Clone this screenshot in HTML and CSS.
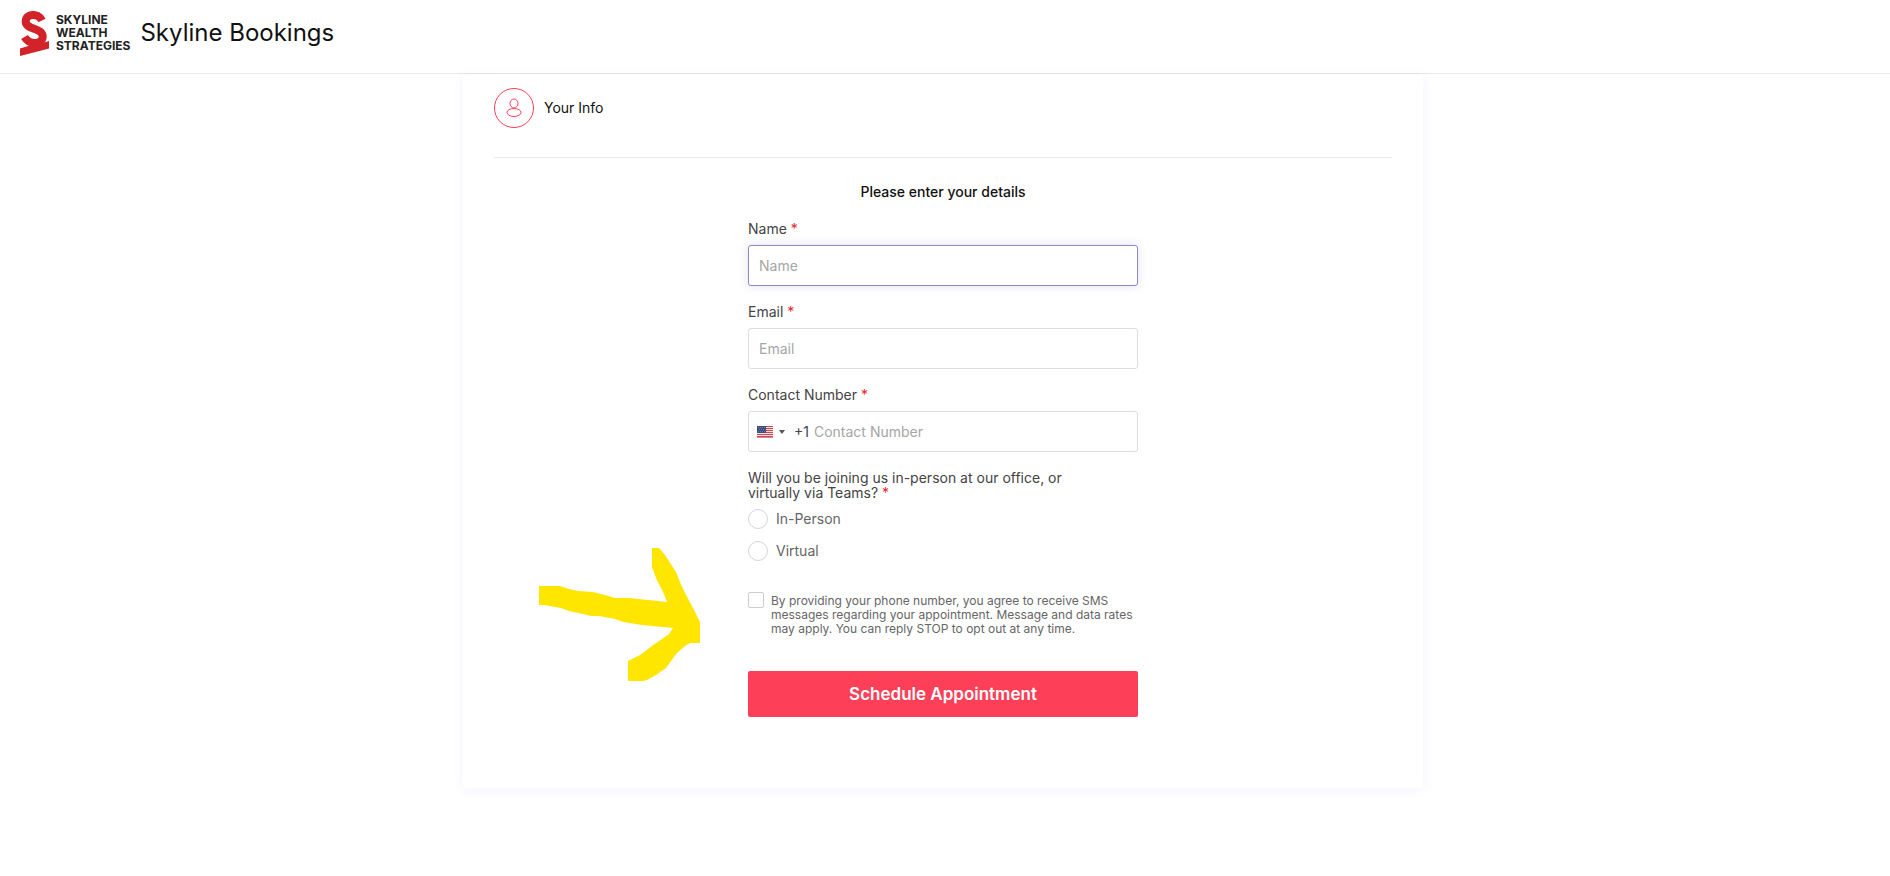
FILE: index.html
```html
<!DOCTYPE html>
<html lang="en">
<head>
<meta charset="utf-8">
<meta name="viewport" content="width=device-width, initial-scale=1">
<title>Skyline Bookings</title>
<link rel="stylesheet" href="styles.css">
</head>
<body>
<header class="topbar">
  <div class="brand">
    <svg class="brand-mark" viewBox="0 0 30 46" aria-hidden="true">
      <path d="M22 9.500C18 1.500 5.700 2.500 5.700 10.500C5.700 19 22.700 16.500 22.700 25.500C22.700 33 10 35 4.500 26" fill="none" stroke="#d2232a" stroke-width="8"/>
      <path d="M0 37.500L10 34.500L17 31L21 32.500L29 30V37.500L0 45Z" fill="#d2232a"/>
    </svg>
    <div class="brand-name">SKYLINE<br>WEALTH<br>STRATEGIES</div>
  </div>
  <h1 class="title">Skyline Bookings</h1>
</header>

<main class="page">
  <section class="card">
    <div class="step">
      <span class="step-icon">
        <svg width="16" height="20" viewBox="0 0 16 20" fill="none" stroke="#fd3f57" aria-hidden="true">
          <ellipse cx="8" cy="5.500" rx="4" ry="4.500"/>
          <ellipse cx="8" cy="14.500" rx="7" ry="4"/>
        </svg>
      </span>
      <span class="step-label">Your Info</span>
    </div>

    <form class="form">
      <h2 class="form-title">Please enter your details</h2>

      <div class="field">
        <label class="label" for="name">Name <span class="required">*</span></label>
        <input class="input input-active" id="name" type="text" placeholder="Name">
      </div>

      <div class="field">
        <label class="label" for="email">Email <span class="required">*</span></label>
        <input class="input" id="email" type="email" placeholder="Email">
      </div>

      <div class="field">
        <label class="label" for="phone">Contact Number <span class="required">*</span></label>
        <div class="input phone">
          <button class="country" type="button" aria-label="Country: United States">
            <svg width="16" height="12" viewBox="0 0 16 12" aria-hidden="true">
              <path fill="#f3dfe2" d="M0 0h16v12H0z"/>
              <path stroke="#cb4a58" d="M0 .5h16M0 2.500h16M0 4.500h16M0 6.500h16M0 8.500h16M0 10.500h16M0 11.900h16"/>
              <path fill="#3c4f7f" d="M0 0h9v7H0z"/>
              <path stroke="#6b7aa0" stroke-dasharray="1 1" d="M1 1.500h7M2 3.500h6M1 5.500h7"/>
            </svg>
            <svg width="6" height="4" viewBox="0 0 6 4" aria-hidden="true"><path d="M0 0h6L3 4z" fill="#555"/></svg>
          </button>
          <span class="dial">+1</span>
          <input class="phone-input" id="phone" type="tel" placeholder="Contact Number">
        </div>
      </div>

      <fieldset class="choices">
        <legend class="label choices-label">Will you be joining us in-person at our office, or virtually via Teams? <span class="required">*</span></legend>
        <label class="choice"><input class="radio" type="radio" name="mode"> In-Person</label>
        <label class="choice"><input class="radio" type="radio" name="mode"> Virtual</label>
      </fieldset>

      <label class="consent">
        <input class="checkbox" type="checkbox">
        <span class="consent-text">By providing your phone number, you agree to receive SMS messages regarding your appointment. Message and data rates may apply. You can reply STOP to opt out at any time.</span>
      </label>

      <button class="submit" type="submit">Schedule Appointment</button>
    </form>

    <svg class="arrow" width="162" height="134" viewBox="0 0 162 134" aria-hidden="true">
      <path fill="#ffe600" d="M0 38H21L30 41L39 43L54 44L66 47L76 50L90 50L128 54L124 44L117 30L113 19V0H120L126 7L137 24L143 39L155 62L161 74V95H151L146 98L138 105L132 113L127 120L117 127L108 132L105 133H89V113L101 107L113 98L130 86L134 80L103 77L84 74L76 71L60 68H52L44 66L30 63L22 60L5 57H0Z"/>
    </svg>
  </section>
</main>
</body>
</html>
```
FILE: styles.css
```css
* { box-sizing: border-box; }

body {
  margin: 0;
  background: #fff;
  color: #111;
  font: 14px/20px Inter, "Liberation Sans", sans-serif;
}

button, input { font: inherit; color: inherit; }

.topbar {
  display: flex;
  align-items: flex-start;
  gap: 10px;
  height: 74px;
  padding: 11px 20px 0;
  border-bottom: 1px solid #e8e8e8;
}

.brand { display: flex; gap: 6px; }

.brand-mark { width: 30px; height: 46px; }

.brand-name {
  padding-top: 2px;
  color: #222;
  font-size: 12px;
  line-height: 13px;
  font-weight: 700;
}

.title {
  margin: 0;
  padding-top: 7px;
  font-size: 24px;
  line-height: 30px;
  font-weight: 400;
}

.page { padding: 0 4px 88px 0; }

.card {
  position: relative;
  max-width: 960px;
  margin: 0 auto;
  padding: 14px 31px 71px;
  border-radius: 0 0 4px 4px;
  box-shadow: 0 2px 12px rgba(90, 90, 255, 0.07);
}

.step {
  display: flex;
  align-items: center;
  gap: 10px;
  padding-bottom: 29px;
  border-bottom: 1px solid #e8e8e8;
}

.step-icon {
  display: flex;
  align-items: center;
  justify-content: center;
  width: 40px;
  height: 40px;
  border: 1px solid #fd3f57;
  border-radius: 50%;
}

.form {
  display: flex;
  flex-direction: column;
  gap: 18px;
  max-width: 390px;
  margin: 0 auto;
  padding-top: 24px;
}

.form-title {
  margin: 0 0 1px;
  font-size: 14px;
  font-weight: 500;
  text-align: center;
}

.field { display: flex; flex-direction: column; gap: 9px; }

.label { padding: 0; color: #444; line-height: 15px; }

.required { color: #e8252b; }

.input {
  width: 100%;
  height: 41px;
  padding: 0 10px;
  border: 1px solid #dedede;
  border-radius: 3px;
  background: #fff;
  outline: 0;
}

.input-active {
  border-color: #8f89c0;
  box-shadow: 0 0 10px rgba(90, 80, 190, 0.18);
}

::placeholder { color: #a6a6a6; opacity: 1; }

.phone {
  display: flex;
  align-items: center;
  padding: 0 8px;
}

.country {
  display: flex;
  align-items: center;
  gap: 6px;
  padding: 0;
  border: 0;
  background: none;
}

.dial { padding: 0 5px 0 9px; color: #444; }

.phone-input {
  flex: 1;
  min-width: 0;
  padding: 0;
  border: 0;
  outline: 0;
  background: none;
}

.choices {
  display: flex;
  flex-direction: column;
  gap: 12px;
  margin: 0;
  padding: 0;
  border: 0;
}

.choices-label { max-width: 350px; margin-bottom: 9px; }

.choice {
  display: flex;
  align-items: center;
  gap: 8px;
  color: #666;
}

.radio, .checkbox {
  appearance: none;
  flex: none;
  margin: 0;
  border: 1px solid #d5d5e0;
  background: #fff;
}

.radio { width: 20px; height: 20px; border-radius: 50%; }

.checkbox { width: 16px; height: 16px; border-color: #ccc; border-radius: 2px; }

.consent {
  display: flex;
  gap: 7px;
  margin-top: 13px;
  color: #666;
  font-size: 12px;
  line-height: 14px;
}

.consent-text { padding-top: 2px; }

.submit {
  height: 46px;
  margin-top: 17px;
  border: 0;
  border-radius: 2px;
  background: #fd3f57;
  color: #fff;
  font-size: 17px;
  font-weight: 600;
}

/* Highlighter arrow drawn over the card */
.arrow { position: absolute; top: 474px; left: 76px; }
```
